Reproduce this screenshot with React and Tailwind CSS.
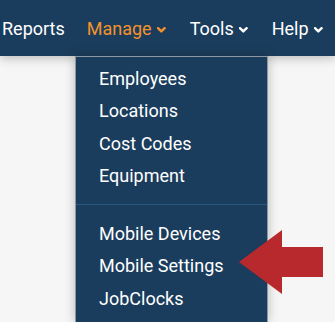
const Chevron = ({ color }) => (
  <svg width="9" height="6" viewBox="0 0 9 6" className="ml-[5px] mr-[2px] mt-1" aria-hidden="true">
    <path d="M1 1.2 L4.3 4.4 L7.6 1.2" fill="none" stroke={color} strokeWidth="2.4" strokeLinecap="round" strokeLinejoin="round" />
  </svg>
);

const groups = [
  ["Employees", "Locations", "Cost Codes", "Equipment"],
  ["Mobile Devices", "Mobile Settings", "JobClocks"],
];

const App = () => {
  return (
    <div className="relative h-[322px] w-[335px] overflow-hidden bg-[#f6f6f6] font-['Roboto',_'Liberation_Sans',_sans-serif]">
      <nav className="relative z-10 flex h-14 items-center gap-[22px] bg-[#1b3d5d] pl-[2px] text-[18px] text-white shadow-[0_2px_10px_rgba(0,0,0,0.25)]">
        <span>Reports</span>
        <span className="flex items-center text-[#f3922a]">
          Manage
          <Chevron color="#f3922a" />
        </span>
        <span className="flex items-center">
          Tools
          <Chevron color="#ffffff" />
        </span>
        <span className="flex items-center whitespace-nowrap">
          Help
          <Chevron color="#ffffff" />
        </span>
      </nav>

      <div className="relative z-20 ml-[75px] h-[266px] w-[193px] border-x border-t border-[#8b98a4] bg-[#1b3d5d] pt-[5px] shadow-[0_0_10px_rgba(0,0,0,0.25)]">
        {groups.map((group, i) => (
          <div key={i}>
            {i > 0 && <div className="my-[12px] h-px bg-[#2a5880]" />}
            {group.map((item) => (
              <div key={item} className="flex h-[32.5px] items-center pl-[23px] text-[18px] text-white">
                {item}
              </div>
            ))}
          </div>
        ))}
      </div>

      {/* annotation arrow */}
      <svg className="absolute left-[238px] top-[229px] z-30" width="86" height="66" viewBox="0 0 86 66">
        <polygon points="1,33 44,1 44,18 85,18 85,48 44,48 44,65" fill="#b8292d" />
      </svg>
    </div>
  );
};

export default App;
